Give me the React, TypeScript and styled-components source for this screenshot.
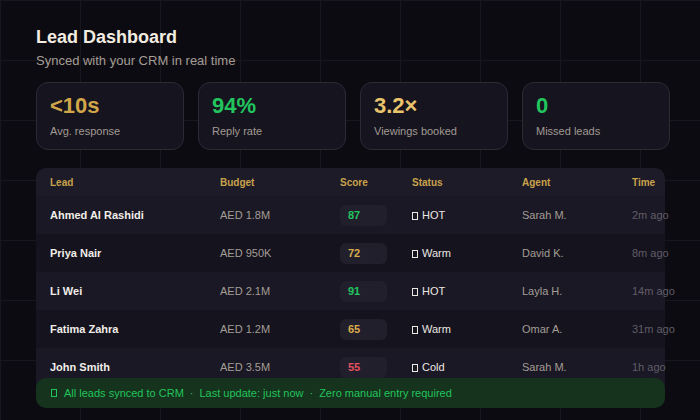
import React from 'react'
import styled, { createGlobalStyle } from 'styled-components'

const GlobalStyle = createGlobalStyle`
  html, body {
    margin: 0;
    padding: 0;
    background: #0c0b11;
  }

  body {
    font-family: 'Liberation Sans', Arial, sans-serif;
  }
`

const Page = styled.div`
  box-sizing: border-box;
  display: flex;
  flex-direction: column;
  width: 700px;
  height: 420px;
  padding: 24px 35px 12px 36px;
  overflow: hidden;
  background-color: #0c0b11;
  background-image: linear-gradient(to right, #18171f 1px, transparent 1px),
    linear-gradient(to bottom, #18171f 1px, transparent 1px);
  background-size: 80px 60px;
  background-position: 0 0;
`

const Title = styled.h1`
  margin: 0;
  font-size: 18px;
  line-height: 26px;
  font-weight: 700;
  color: #f3ece1;
`

const Subtitle = styled.p`
  margin: 2px 0 0;
  font-size: 13px;
  line-height: 18px;
  color: #a49d95;
`

const Stats = styled.div`
  display: grid;
  grid-template-columns: repeat(4, 148px);
  gap: 14px;
  margin-top: 12px;
`

const StatCard = styled.div`
  box-sizing: border-box;
  height: 68px;
  padding: 10px 13px 0;
  background: #16141e;
  border: 1px solid #2d2a37;
  border-radius: 12px;
`

const StatValue = styled.div<{ $tone: string }>`
  font-size: 22px;
  line-height: 26px;
  font-weight: 700;
  color: ${(p) => p.$tone};
`

const StatLabel = styled.div`
  margin-top: 5px;
  font-size: 11px;
  line-height: 14px;
  color: #a19a93;
`

const TableArea = styled.div`
  flex: 1 1 0;
  min-height: 0;
  margin-top: 18px;
  width: 629px;
`

const cols = '170px 120px 72px 110px 110px 47px'

const HeadRow = styled.div`
  display: grid;
  grid-template-columns: ${cols};
  align-items: center;
  height: 28px;
  background: #1d1b28;
  border-radius: 10px 10px 0 0;
`

const HeadCell = styled.div`
  padding-left: 14px;
  font-size: 10px;
  font-weight: 700;
  color: #c9a24c;
  white-space: nowrap;
`

const Row = styled.div<{ $odd: boolean }>`
  display: grid;
  grid-template-columns: ${cols};
  align-items: center;
  height: 38px;
  background: ${(p) => (p.$odd ? '#1a1824' : '#15131d')};
`

const Cell = styled.div<{ $tone?: string; $bold?: boolean }>`
  padding-left: 14px;
  font-size: 11px;
  font-weight: ${(p) => (p.$bold ? 700 : 400)};
  color: ${(p) => p.$tone ?? '#a39d96'};
  white-space: nowrap;
`

const ScorePill = styled.span<{ $tone: string }>`
  display: inline-flex;
  align-items: center;
  box-sizing: border-box;
  width: 47px;
  height: 21px;
  padding-left: 8px;
  border-radius: 6px;
  background: #221f2d;
  font-size: 11px;
  font-weight: 700;
  color: ${(p) => p.$tone};
`

// hollow box used as the status / sync marker
const Mark = styled.span`
  display: inline-block;
  box-sizing: border-box;
  width: 6px;
  height: 8px;
  margin-right: 4px;
  border: 1px solid currentColor;
  vertical-align: -1px;
`

const Banner = styled.div`
  position: relative;
  z-index: 1;
  display: flex;
  align-items: center;
  box-sizing: border-box;
  width: 629px;
  height: 30px;
  padding-left: 15px;
  border-radius: 10px;
  background: #15331d;
  font-size: 11px;
  color: #23c35c;
  white-space: nowrap;
`

const BannerMark = styled(Mark)`
  margin-right: 7px;
`

const Dot = styled.span`
  margin: 0 6px;
`

const GREEN = '#22c55e'
const GOLD = '#d9ab4c'
const RED = '#e0515f'

const stats = [
  { value: '<10s', label: 'Avg. response', tone: '#d1a64a' },
  { value: '94%', label: 'Reply rate', tone: GREEN },
  { value: '3.2×', label: 'Viewings booked', tone: '#e9c46c' },
  { value: '0', label: 'Missed leads', tone: GREEN },
]

const leads = [
  { name: 'Ahmed Al Rashidi', budget: 'AED 1.8M', score: 87, status: 'HOT', agent: 'Sarah M.', time: '2m ago' },
  { name: 'Priya Nair', budget: 'AED 950K', score: 72, status: 'Warm', agent: 'David K.', time: '8m ago' },
  { name: 'Li Wei', budget: 'AED 2.1M', score: 91, status: 'HOT', agent: 'Layla H.', time: '14m ago' },
  { name: 'Fatima Zahra', budget: 'AED 1.2M', score: 65, status: 'Warm', agent: 'Omar A.', time: '31m ago' },
  { name: 'John Smith', budget: 'AED 3.5M', score: 55, status: 'Cold', agent: 'Sarah M.', time: '1h ago' },
]

function scoreTone(score: number) {
  if (score >= 80) return GREEN
  if (score >= 60) return GOLD
  return RED
}

export default function App() {
  return (
    <>
      <GlobalStyle />
      <Page>
        <Title>Lead Dashboard</Title>
        <Subtitle>Synced with your CRM in real time</Subtitle>

        <Stats>
          {stats.map((s) => (
            <StatCard key={s.label}>
              <StatValue $tone={s.tone}>{s.value}</StatValue>
              <StatLabel>{s.label}</StatLabel>
            </StatCard>
          ))}
        </Stats>

        <TableArea>
          <HeadRow>
            {['Lead', 'Budget', 'Score', 'Status', 'Agent', 'Time'].map((h) => (
              <HeadCell key={h}>{h}</HeadCell>
            ))}
          </HeadRow>
          {leads.map((lead, i) => (
            <Row key={lead.name} $odd={i % 2 === 0}>
              <Cell $bold $tone="#f1ede8">
                {lead.name}
              </Cell>
              <Cell>{lead.budget}</Cell>
              <Cell>
                <ScorePill $tone={scoreTone(lead.score)}>{lead.score}</ScorePill>
              </Cell>
              <Cell $tone="#ebe7e2">
                <Mark />
                {lead.status}
              </Cell>
              <Cell>{lead.agent}</Cell>
              <Cell $tone="#605d68">{lead.time}</Cell>
            </Row>
          ))}
        </TableArea>

        <Banner>
          <BannerMark />
          All leads synced to CRM<Dot>·</Dot>Last update: just now<Dot>·</Dot>Zero manual entry required
        </Banner>
      </Page>
    </>
  )
}
